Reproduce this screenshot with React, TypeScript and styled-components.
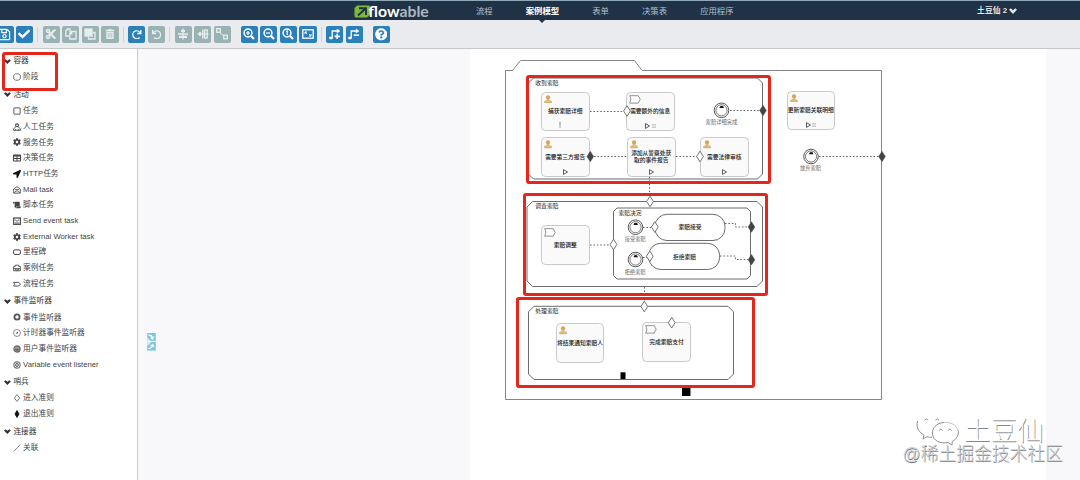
import React from 'react';
import styled, { createGlobalStyle } from 'styled-components';
import {
  FaRegSave, FaCheck, FaCut, FaTrashAlt, FaRedo, FaUndo, FaCog, FaTable, FaLocationArrow,
  FaScroll, FaQuestionCircle,
} from 'react-icons/fa';

const Global = createGlobalStyle`
  html, body { margin: 0; padding: 0; }
  body { font-family: "Liberation Sans", "Noto Sans CJK SC", sans-serif; background: #fff; }
  * { box-sizing: border-box; }
  svg { display: block; flex: none; }
`;

const RED = '#e5261b';

const Page = styled.div`
  position: relative;
  display: flex;
  flex-direction: column;
  width: 1080px;
  height: 480px;
  overflow: hidden;
`;

const Header = styled.header`
  display: flex;
  flex: none;
  align-items: center;
  height: 20px;
  padding: 0 63px 0 354px;
  border-top: 1px solid #8fa9b9;
  background: #1f3246;
  color: #b9c4ce;
`;

const Nav = styled.nav`
  display: flex;
  flex: 1;
  margin-left: 46px;
  gap: 33px;
`;

const NavItem = styled.a<{ $active?: boolean }>`
  position: relative;
  font-size: 8.4px;
  line-height: 18px;
  white-space: nowrap;
  color: ${(p) => (p.$active ? '#fff' : '#b3bfca')};
  font-weight: ${(p) => (p.$active ? 700 : 400)};
  ${(p) => p.$active && `
    &::after {
      content: '';
      position: absolute;
      left: 50%;
      top: 18px;
      margin-left: -3.5px;
      border: 3.5px solid transparent;
      border-bottom: 0;
      border-top-color: #1f3246;
    }
  `}
`;

const User = styled.div`
  display: flex;
  align-items: center;
  gap: 2px;
  font-size: 7.8px;
  line-height: 18px;
  font-weight: 700;
  color: #dfe5ea;
`;

const Toolbar = styled.div`
  display: flex;
  flex: none;
  align-items: center;
  height: 29px;
  padding-top: 1px;
  background: #e9ebef;
  border-bottom: 1px solid #c6c7c9;
`;

const Group = styled.div<{ $ml: number }>`
  display: flex;
  gap: 2.3px;
  margin-left: ${(p) => p.$ml}px;
`;

const Divider = styled.div`
  width: 1px;
  height: 15px;
  margin-left: 4px;
  background: #cfd2d6;
`;

const ToolButton = styled.button<{ $off?: boolean }>`
  display: flex;
  align-items: center;
  justify-content: center;
  flex: none;
  width: 17.3px;
  height: 17.3px;
  padding: 0;
  border: 0;
  border-radius: 2px;
  background: ${(p) => (p.$off ? '#9bb2b5' : '#2c80ba')};
  color: ${(p) => (p.$off ? '#e6edee' : '#fff')};
`;

const Body = styled.main`
  display: flex;
  flex: 1;
  min-height: 0;
`;

const Sidebar = styled.aside`
  width: 138px;
  flex: none;
  padding-top: 2.4px;
  border-right: 1px solid #c9cacc;
  background: #fff;
`;

const SectionTitle = styled.div`
  display: flex;
  align-items: center;
  gap: 2.6px;
  height: 18.1px;
  padding: 1.6px 0 0 4px;
  font-size: 7.7px;
  line-height: 16px;
  color: #333;
`;

const Item = styled.div`
  display: flex;
  align-items: center;
  gap: 2.6px;
  height: 15.7px;
  padding-left: 12.5px;
  font-size: 7.7px;
  line-height: 15.7px;
  white-space: nowrap;
  color: #444;
`;

const Gutter = styled.div`
  display: flex;
  flex-direction: column;
  gap: 1px;
  width: 332px;
  padding: 283.5px 0 0 9px;
  background: #f8f8fb;
`;

const Canvas = styled.section`
  position: relative;
  width: 576px;
  background: #fff;
`;

const Margin = styled.div`
  flex: 1;
  background: #f8f8fb;
`;

const Lines = styled.svg`
  position: absolute;
  left: -470px;
  top: -49px;
`;

const Node = styled.div<{ $x: number; $y: number }>`
  position: absolute;
  left: ${(p) => p.$x - 470}px;
  top: ${(p) => p.$y - 49}px;
  display: flex;
  align-items: center;
  justify-content: center;
  width: 48.5px;
  height: 39.5px;
  border: 1px solid #c9c9cb;
  border-radius: 4.5px;
  background: #fafafb;
  color: #161616;
  font-size: 5.75px;
  font-weight: 500;
  line-height: 6.4px;
  text-align: center;
  white-space: pre;
`;

const Corner = styled.span`
  position: absolute;
  left: 2px;
  top: 2px;
`;

const Marker = styled.span`
  position: absolute;
  left: 0;
  right: 0;
  bottom: 1px;
  display: flex;
  justify-content: center;
  gap: 1.5px;
`;

const Caption = styled.span<{ $x: number; $y: number; $tone?: string; $size?: number; $center?: boolean; $strong?: boolean }>`
  position: absolute;
  left: ${(p) => p.$x - 470}px;
  top: ${(p) => p.$y - 49}px;
  transform: translate(${(p) => (p.$center ? '-50%' : '0')}, -50%);
  font-size: ${(p) => p.$size ?? 5.8}px;
  font-weight: ${(p) => (p.$strong ? 500 : 400)};
  line-height: 8px;
  white-space: nowrap;
  color: ${(p) => p.$tone ?? '#222'};
`;

const Highlight = styled.div<{ $x: number; $y: number; $w: number; $h: number }>`
  position: absolute;
  left: ${(p) => p.$x}px;
  top: ${(p) => p.$y}px;
  width: ${(p) => p.$w}px;
  height: ${(p) => p.$h}px;
  border: 3px solid ${RED};
  border-radius: 3px;
`;

const Watermark = styled.div`
  position: absolute;
  left: 902.5px;
  top: 414px;
  display: flex;
  flex-direction: column;
`;

const Signature = styled.div`
  display: flex;
  align-items: center;
  gap: 4px;
  height: 34px;
  padding-left: 13.5px;
  font-size: 26.5px;
  line-height: 34px;
  font-weight: 300;
  color: #fff;
  text-shadow: 0.8px 0.8px 0.4px #85858b;
`;

const Community = styled.div`
  margin-top: -5.5px;
  font-size: 17.8px;
  line-height: 22px;
  font-weight: 300;
  white-space: nowrap;
  color: #d0d0d4;
  text-shadow: 0.6px 0.6px 0.4px #7c7c82;
`;

const Glyph = ({ children, size = 12, sw = 1.3 }: { children: React.ReactNode; size?: number; sw?: number }) => (
  <svg width={size} height={size} viewBox="0 0 12 12" fill="none" stroke="currentColor" strokeWidth={sw}>
    {children}
  </svg>
);

const Chevron = ({ w = 7 }: { w?: number }) => (
  <svg width={w} height={w * 0.75} viewBox="0 0 8 6">
    <path d="M0 1.8 L1.7 0.3 L4 2.2 L6.3 0.3 L8 1.8 L4 5.9 Z" fill="currentColor" />
  </svg>
);

const Zoom = ({ children }: { children: React.ReactNode }) => (
  <Glyph>
    <circle cx="5" cy="5" r="3.9" strokeWidth="1.5" />
    <path d="M7.8 7.8 L11 11" strokeWidth="2.2" />
    <g strokeWidth="1.2">{children}</g>
  </Glyph>
);

const ManIcon = () => (
  <svg width="8" height="8.5" viewBox="0 0 8 8.5">
    <circle cx="4" cy="2.3" r="2.1" fill="#d6a55c" />
    <path d="M3 3.5 H5 V5.4 L7.4 6.2 V7.9 H0.6 V6.2 L3 5.4 Z" fill="#e3bd7c" stroke="#c99c50" strokeWidth="0.5" />
  </svg>
);

const ProcessIcon = () => (
  <svg width="12" height="9" viewBox="0 0 12 9">
    <path d="M0.6 0.7 H9.2 L11.2 4.4 L9.2 8.1 H0.6 C2.2 5.6 2.2 3.2 0.6 0.7 Z" fill="#fff" stroke="#777" strokeWidth="0.8" />
  </svg>
);

const Play = () => (
  <svg width="5" height="6" viewBox="0 0 5 6">
    <path d="M0.5 0.6 L4.5 3 L0.5 5.4 Z" fill="#fff" stroke="#333" strokeWidth="0.8" />
  </svg>
);

const Dots = () => (
  <svg width="4" height="6" viewBox="0 0 4 6">
    <path d="M0 1.5 H4 M0 3 H4 M0 4.5 H4" stroke="#bbb" strokeWidth="0.8" />
  </svg>
);

const Bang = () => (
  <svg width="12" height="7" viewBox="0 0 12 7">
    <path d="M1 0 V3.6 M1 4.4 V5.6" stroke="#555" strokeWidth="0.8" />
  </svg>
);

const side: Record<string, React.ReactNode> = {
  stage: <path d="M4 1.2 H8 L11 3.5 V8.5 L8 10.8 H4 L1 8.5 V3.5 Z" strokeWidth="1.1" />,
  task: <rect x="1.3" y="1.3" width="9.4" height="9.4" rx="0.5" />,
  human: <><circle cx="6" cy="3.5" r="2.2" strokeWidth="1.6" /><path d="M4.2 6 L1 8.5 V11 H11 V8.5 L7.8 6 M4 11 V9 M8 11 V9" /></>,
  mail: <path d="M1 4.5 L6 1 L11 4.5 V10.7 H1 Z M3 5.5 H9 M2 9.8 L5 7.5 H7 L10 9.8" />,
  send: <><rect x="1" y="1.5" width="10" height="9.5" strokeWidth="1.8" /><path d="M3 4 L6 6.5 L9 4 M3 9 H9" /></>,
  mile: <rect x="0.8" y="2.8" width="10.4" height="6.8" rx="2" strokeWidth="1.5" />,
  case: <><path d="M1 10.2 V3.5 H3.5 V1.8 H8.5 V3.5 H11 V10.2 Z M1 7 H11" /><path d="M4 7 V9 H8 V7" /></>,
  process: <path d="M1 3.5 H8.6 L11.2 6.3 L8.6 9 H1 L2.3 6.3 Z" strokeWidth="1.4" />,
  event: <circle cx="6" cy="6" r="3.9" strokeWidth="2.7" stroke="#555" />,
  timer: <><circle cx="6" cy="6" r="5.2" strokeWidth="0.9" /><path d="M5.3 7 L7.3 4.8" strokeWidth="1.7" /></>,
  user: <><circle cx="6" cy="6" r="4.6" strokeWidth="1.8" fill="#999" stroke="#666" /><path d="M3.5 7.2 H8.5" stroke="#333" /></>,
  variable: <><circle cx="6" cy="6" r="4.7" strokeWidth="1.7" stroke="#777" /><circle cx="6" cy="6" r="2.1" strokeWidth="1.4" /></>,
  entry: <path d="M6 0.8 L9.9 6 L6 11.2 L2.1 6 Z" strokeWidth="1" />,
  exit: <path d="M6 0.8 L9 6 L6 11.2 L3 6 Z" fill="#111" stroke="#111" />,
  link: <path d="M1.5 10.8 L10.5 1.2" strokeWidth="0.9" />,
};

const faSide: Record<string, React.ReactNode> = {
  gear: <FaCog size={8} />,
  table: <FaTable size={8} />,
  arrow: <FaLocationArrow size={8} color="#111" />,
  script: <FaScroll size={8} />,
};

const sections: [string, [string, string][]][] = [
  ['容器', [['stage', '阶段']]],
  ['活动', [
    ['task', '任务'], ['human', '人工任务'], ['gear', '服务任务'], ['table', '决策任务'],
    ['arrow', 'HTTP任务'], ['mail', 'Mail task'], ['script', '脚本任务'], ['send', 'Send event task'],
    ['gear', 'External Worker task'], ['mile', '里程碑'], ['case', '案例任务'], ['process', '流程任务'],
  ]],
  ['事件监听器', [
    ['event', '事件监听器'], ['timer', '计时器事件监听器'], ['user', '用户事件监听器'], ['variable', 'Variable event listener'],
  ]],
  ['哨兵', [['entry', '进入准则'], ['exit', '退出准则']]],
  ['连接器', [['link', '关联']]],
];

const play = <Play />;
const playDots = <><Play /><Dots /></>;

const nodes: { x: number; y: number; text: string; kind: 'man' | 'process'; mark?: React.ReactNode }[] = [
  { x: 541, y: 91.5, text: '捕获索赔详细', kind: 'man', mark: <Bang /> },
  { x: 626, y: 91.5, text: '需要额外的信息', kind: 'process', mark: playDots },
  { x: 541, y: 137, text: '需要第三方报告', kind: 'man', mark: play },
  { x: 627, y: 137, text: '添加从警察处获\n取的事件报告', kind: 'man', mark: play },
  { x: 700, y: 137, text: '需要法律审核', kind: 'man', mark: play },
  { x: 786.5, y: 90.5, text: '更新索赔关联明细', kind: 'man', mark: playDots },
  { x: 541, y: 225, text: '索赔调整', kind: 'process' },
  { x: 555.8, y: 323.3, text: '将结果通知索赔人', kind: 'man' },
  { x: 642.2, y: 322.3, text: '完成索赔支付', kind: 'process' },
];

const cut = (x1: number, y1: number, x2: number, y2: number, c: number) =>
  `M${x1 + c} ${y1} H${x2 - c} L${x2} ${y1 + c} V${y2 - c} L${x2 - c} ${y2} H${x1 + c} L${x1} ${y2 - c} V${y1 + c} Z`;

const Diamond = ({ x, y, solid }: { x: number; y: number; solid?: boolean }) => (
  <path
    d={`M${x} ${y - 5.3} L${x + 3.4} ${y} L${x} ${y + 5.3} L${x - 3.4} ${y} Z`}
    fill={solid ? '#444' : '#fff'}
    stroke={solid ? '#444' : '#666'}
    strokeWidth={solid ? 0.4 : 0.9}
  />
);

const Listener = ({ x, y }: { x: number; y: number }) => (
  <g fill="none" stroke="#444">
    <circle cx={x} cy={y} r="7.3" strokeWidth="0.9" fill="#fff" />
    <circle cx={x} cy={y} r="5.6" strokeWidth="0.7" />
    <path d={`M${x - 2} ${y - 2.2} q0.3 -2.3 2.2 -2.3 q2 0 2.2 2.3 z`} fill="#111" stroke="none" />
  </g>
);

const Swirl = ({ flip }: { flip?: boolean }) => (
  <svg width="9" height="8.6" viewBox="0 0 9 9">
    <g transform={flip ? 'translate(0 9) scale(1 -1)' : undefined}>
      <rect width="9" height="9" fill="#7cc5dc" />
      <path d="M0.5 2.2 C2.5 1 5 2 5.8 4 L7.6 3.6 L6 7.4 L2.8 5.2 L4.3 4.6 C3.6 3.3 2.2 2.8 0.5 2.2 Z" fill="#fff" />
      <path d="M0 4.5 L3.6 8 V9 H0 Z" fill="#d6edf4" />
    </g>
  </svg>
);

export default function App() {
  return (
    <Page>
      <Global />
      <Header>
        <svg width="76" height="18" viewBox="0 0 76 18">
          <path d="M3 3.5 H14.5 Q16 3.5 16 5 V12.5 L13 15.5 H2 Q0.5 15.5 0.5 14 V6 Z" fill="#80b83c" />
          <path d="M4 13.5 L11 7 M5 6.3 H12 V13" fill="none" stroke="#1f3246" strokeWidth="1.9" />
          <text x="14.3" y="15" fontFamily="Lato, sans-serif" fontWeight="700" fontSize="15.5" fill="#fff" textLength="60.5" lengthAdjust="spacingAndGlyphs">
            flow<tspan fill="#aeb8c1">able</tspan>
          </text>
        </svg>
        <Nav>
          <NavItem>流程</NavItem>
          <NavItem $active>案例模型</NavItem>
          <NavItem>表单</NavItem>
          <NavItem>决策表</NavItem>
          <NavItem>应用程序</NavItem>
        </Nav>
        <User>土豆仙 2 <Chevron w={8} /></User>
      </Header>
      <Toolbar>
        <Group $ml={-3.8}>
          <ToolButton><FaRegSave size={13} /></ToolButton>
          <ToolButton><FaCheck size={12} /></ToolButton>
        </Group>
        <Divider />
        <Group $ml={4.5}>
          <ToolButton $off><FaCut size={12} /></ToolButton>
          <ToolButton $off><Glyph><path d="M5 4 V1 H2.5 L0.8 3 V8 H4 M4.8 5.5 L6.5 3.5 H11 V11 H4.8 Z M6.8 3.8 V5.8 H5" /></Glyph></ToolButton>
          <ToolButton $off><Glyph><rect x="1" y="1" width="7" height="7" fill="currentColor" /><path d="M9 4.5 H11 V11 H4.5 V9" /></Glyph></ToolButton>
          <ToolButton $off><FaTrashAlt size={10} /></ToolButton>
        </Group>
        <Divider />
        <Group $ml={4.5}>
          <ToolButton><FaRedo size={9.5} /></ToolButton>
          <ToolButton $off><FaUndo size={9.5} /></ToolButton>
        </Group>
        <Divider />
        <Group $ml={4.5}>
          <ToolButton $off><Glyph><path d="M6 0.5 V11.5 M1 6 H11" /><path d="M4 3 H8 M2 8.8 H10" strokeWidth="2.2" /></Glyph></ToolButton>
          <ToolButton $off><Glyph><path d="M0.5 6 H11.5" /><path d="M3 4 V8" strokeWidth="2" /><path d="M5.8 1.5 V10.5" /><rect x="7.6" y="2" width="2.6" height="8" /></Glyph></ToolButton>
          <ToolButton $off><Glyph><rect x="0.7" y="0.7" width="3.6" height="3.6" /><rect x="7.7" y="7.2" width="3.6" height="3.6" /><path d="M4.5 5 L7.5 8" strokeDasharray="1.2 0.8" /></Glyph></ToolButton>
        </Group>
        <Group $ml={9.5}>
          <ToolButton><Zoom><path d="M5 3 V7 M3 5 H7" /></Zoom></ToolButton>
          <ToolButton><Zoom><path d="M3 5 H7" /></Zoom></ToolButton>
          <ToolButton><Zoom><path d="M4.2 3.6 L5.2 3 V7" /></Zoom></ToolButton>
          <ToolButton><Glyph><rect x="0.8" y="1.8" width="10.4" height="8.4" /><path d="M3 6 V4 H5 M7 8 H9 V6 M3.2 4.2 L5 5.7 M8.8 7.8 L7 6.3" strokeWidth="1" /></Glyph></ToolButton>
        </Group>
        <Divider />
        <Group $ml={4.5}>
          <ToolButton><Glyph><path d="M1 10 H3.2 V3 H9.5" /><path d="M8 1 L11 3 L8 5 Z M0.5 9 h2.5 v2 h-2.5 Z" fill="currentColor" strokeWidth="0.5" /><path d="M8.2 5.8 V11 M5.6 8.4 H10.8" strokeWidth="1.6" /></Glyph></ToolButton>
          <ToolButton><Glyph><path d="M1 10 H3.2 V3 H9.5" /><path d="M8 1 L11 3 L8 5 Z M0.5 9 h2.5 v2 h-2.5 Z" fill="currentColor" strokeWidth="0.5" /><path d="M5.8 7.2 H11" strokeWidth="1.6" /></Glyph></ToolButton>
        </Group>
        <Group $ml={9.5}>
          <ToolButton><FaQuestionCircle size={12.5} /></ToolButton>
        </Group>
      </Toolbar>
      <Body>
        <Sidebar>
          {sections.map(([title, items]) => (
            <React.Fragment key={title}>
              <SectionTitle><Chevron w={6.8} />{title}</SectionTitle>
              {items.map(([icon, label]) => (
                <Item key={label}>
                  {faSide[icon] ?? <Glyph size={8}>{side[icon]}</Glyph>}
                  {label}
                </Item>
              ))}
            </React.Fragment>
          ))}
        </Sidebar>
        <Gutter><Swirl /><Swirl flip /></Gutter>
        <Canvas>
          <Lines width="1080" height="480" viewBox="0 0 1080 480" fill="none" stroke="#6c6c6c" strokeWidth="1">
            <path d="M505.5 70.5 V399.5 H881.5 V70.5 H642 L634.5 60.5 H520.5 L512.5 70.5 Z M505.5 70.5 H513" stroke="#858585" />
            <path d={cut(528.5, 78, 762.5, 179, 5)} />
            <path d={cut(527, 201.5, 762.5, 286.5, 5.5)} />
            <path d={cut(613.5, 208, 750.5, 279, 3.5)} />
            <path d={cut(528.5, 306.3, 733.5, 379.5, 5.5)} />
            <rect x="655" y="214.3" width="70" height="26.2" rx="12" />
            <rect x="648.8" y="243.3" width="70.8" height="26.2" rx="12" />
          </Lines>
          {nodes.map((n) => (
            <Node key={n.text} $x={n.x} $y={n.y}>
              <Corner>{n.kind === 'man' ? <ManIcon /> : <ProcessIcon />}</Corner>
              {n.text}
              <Marker>{n.mark}</Marker>
            </Node>
          ))}
          <Lines width="1080" height="480" viewBox="0 0 1080 480" fill="none">
            <g stroke="#555" strokeWidth="0.9" strokeDasharray="1.6 1.8">
              <path d="M590 111.5 H623 M730 110.5 H760 M594 156.5 H627 M676 156.5 H697 M819 156.5 H879" />
              <path d="M649.5 177 V196 M590 245 H610 M643 227.5 H651 M643 257.5 H647 M644.5 287 V301" />
              <path d="M725 223.5 H735.5 V227 H748 M720 256 H735.5 V259.5 H748" />
            </g>
            <Diamond x={627} y={111} />
            <Diamond x={700} y={156.5} />
            <Diamond x={650} y={201.5} />
            <Diamond x={613.5} y={244.5} />
            <Diamond x={654.8} y={227} />
            <Diamond x={649.8} y={256.3} />
            <Diamond x={644.3} y={306.5} />
            <Diamond x={671.7} y={322.7} />
            <Diamond x={763} y={110.5} solid />
            <Diamond x={590.3} y={156.5} solid />
            <Diamond x={882} y={156.5} solid />
            <Diamond x={751.5} y={227} solid />
            <Diamond x={751.5} y={259.7} solid />
            <Listener x={721.5} y={110.3} />
            <Listener x={811} y={156.5} />
            <Listener x={635.5} y={227.2} />
            <Listener x={635.5} y={259.5} />
            <rect x="620.5" y="372.3" width="5" height="6.7" fill="#000" />
            <rect x="682" y="387.3" width="8.5" height="8.7" fill="#000" />
          </Lines>
          <Caption $x={535.3} $y={82.5}>收到索赔</Caption>
          <Caption $x={535.3} $y={205.5}>调查索赔</Caption>
          <Caption $x={618.5} $y={212.8}>索赔决定</Caption>
          <Caption $x={535.3} $y={310.8}>处理索赔</Caption>
          <Caption $x={690} $y={227.3} $center $strong>索赔接受</Caption>
          <Caption $x={684.5} $y={256.5} $center $strong>拒绝索赔</Caption>
          <Caption $x={721.5} $y={121.8} $center $size={5.3} $tone="#666">索赔详细完成</Caption>
          <Caption $x={810.5} $y={168} $center $size={5.3} $tone="#666">放弃索赔</Caption>
          <Caption $x={635.3} $y={238.7} $center $size={5.3} $tone="#666">接受索赔</Caption>
          <Caption $x={635.3} $y={271.5} $center $size={5.3} $tone="#666">拒绝索赔</Caption>
        </Canvas>
        <Margin />
      </Body>
      <Highlight $x={2} $y={52} $w={56} $h={38.5} />
      <Highlight $x={526} $y={75} $w={245} $h={109} />
      <Highlight $x={523} $y={193} $w={245} $h={103} />
      <Highlight $x={516} $y={296.5} $w={239} $h={91} />
      <Watermark>
        <Signature>
          <svg width="44" height="32" viewBox="0 0 44 32" fill="none" stroke="#8f8f95" strokeWidth="1">
            <path d="M1.5 6 C-0.5 13 4 18 8 20 L7 24 L11 21.5 C13 22.3 14 22.4 16 22.2" />
            <path d="M28 7.5 C20 8 16 13 16.5 19 C17.5 26 24 29 32 27.5 L36 30 L36.2 26.5 C41 24 43.5 19 42 15" />
            <path d="M42 15 C40 10 35 7 28 7.5" stroke="#c4c4c8" />
            <path d="M8.5 5.2 q1.8 -2.8 3.6 0 M19.5 5.2 q1.8 -2.8 3.6 0 M23 15.5 q1.8 -2.8 3.6 0 M32 15.5 q1.8 -2.8 3.6 0" />
          </svg>
          土豆仙
        </Signature>
        <Community>@稀土掘金技术社区</Community>
      </Watermark>
    </Page>
  );
}
